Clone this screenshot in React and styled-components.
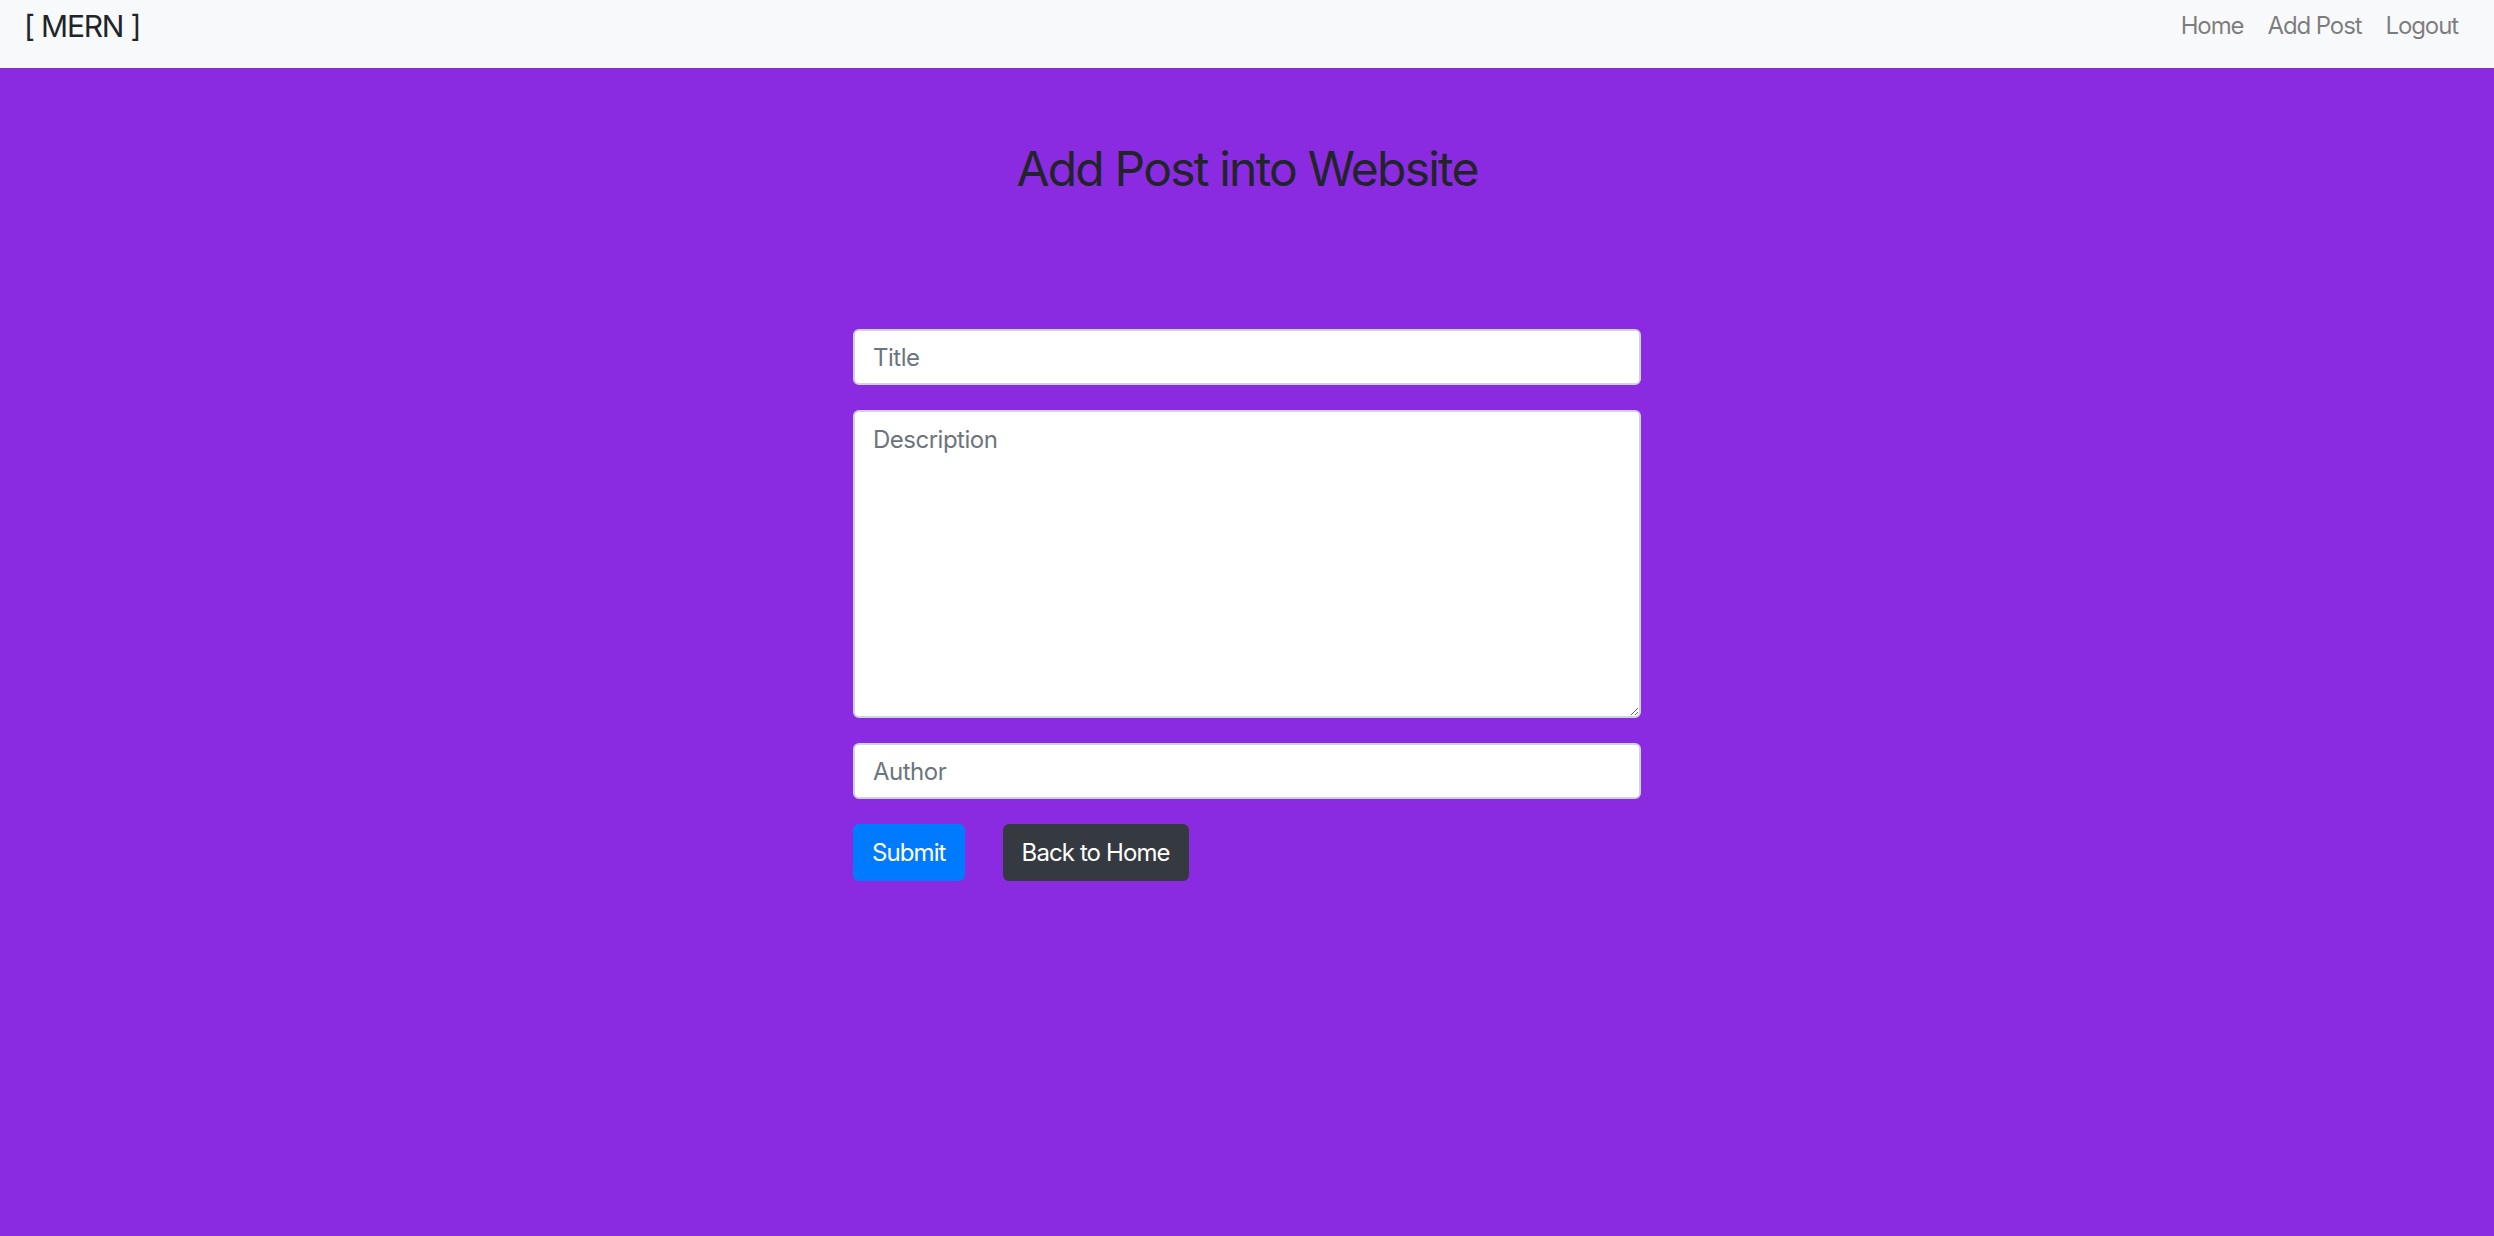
import styled, { createGlobalStyle } from "styled-components"

const GlobalStyle = createGlobalStyle`
  body {
    margin: 0;
    font-family: Inter, "Noto Sans", sans-serif;
    background-color: #8a2be2;
  }
`

const Page = styled.div`
  min-height: 100vh;
  background-color: #8a2be2;
`

const NavBar = styled.nav`
  height: 68px;
  box-sizing: border-box;
  background-color: #f8f9fa;
  display: flex;
  justify-content: space-between;
  align-items: flex-start;
  padding: 4px 24px 0 24px;
`

const Brand = styled.a`
  font-size: 30px;
  line-height: 45px;
  letter-spacing: -1.2px;
  color: #212529;
  text-decoration: none;
`

const NavLinks = styled.ul`
  display: flex;
  list-style: none;
  margin: 4px 0 0 0;
  padding: 0;
`

const NavLink = styled.a`
  display: block;
  padding: 0 12px;
  font-size: 24px;
  line-height: 36px;
  letter-spacing: -1.1px;
  color: rgba(0, 0, 0, 0.5);
  text-decoration: none;
`

const Heading = styled.h2`
  margin: 72px 0 0 0;
  text-align: center;
  font-size: 48px;
  font-weight: 400;
  line-height: 57.6px;
  color: #212529;
  letter-spacing: -1.8px;
`

const Form = styled.form`
  width: 788px;
  margin: 131px auto 0 auto;
  display: flex;
  flex-direction: column;
  gap: 25px;
`

const fieldStyles = `
  box-sizing: border-box;
  width: 100%;
  padding: 10px 18px 8px 18px;
  font-family: Inter, "Noto Sans", sans-serif;
  font-size: 24px;
  line-height: 36px;
  letter-spacing: -0.5px;
  color: #495057;
  background-color: #fff;
  border: 2px solid #ced4da;
  border-radius: 6px;
  outline: none;
  &::placeholder {
    color: #6c757d;
  }
`

const Input = styled.input`
  ${fieldStyles}
  height: 56px;
`

const TextArea = styled.textarea`
  ${fieldStyles}
  height: 308px;
  resize: vertical;
`

const ButtonRow = styled.div`
  display: flex;
  gap: 38px;
`

const Button = styled.button`
  box-sizing: border-box;
  height: 57px;
  padding: 10px 19px 8px 19px;
  font-family: Inter, "Noto Sans", sans-serif;
  font-size: 24px;
  line-height: 36px;
  letter-spacing: -0.9px;
  color: #fff;
  border: none;
  border-radius: 6px;
  background-color: ${({ $variant }) => ($variant === "dark" ? "#343a40" : "#007bff")};
  cursor: pointer;
`

function App() {
  return (
    <Page>
      <GlobalStyle />
      <NavBar>
        <Brand href="#">[ MERN ]</Brand>
        <NavLinks>
          <li><NavLink href="#">Home</NavLink></li>
          <li><NavLink href="#">Add Post</NavLink></li>
          <li><NavLink href="#">Logout</NavLink></li>
        </NavLinks>
      </NavBar>
      <Heading>Add Post into Website</Heading>
      <Form onSubmit={(e) => e.preventDefault()}>
        <Input type="text" placeholder="Title" />
        <TextArea placeholder="Description" />
        <Input type="text" placeholder="Author" />
        <ButtonRow>
          <Button type="submit">Submit</Button>
          <Button type="button" $variant="dark">Back to Home</Button>
        </ButtonRow>
      </Form>
    </Page>
  )
}

export default App
